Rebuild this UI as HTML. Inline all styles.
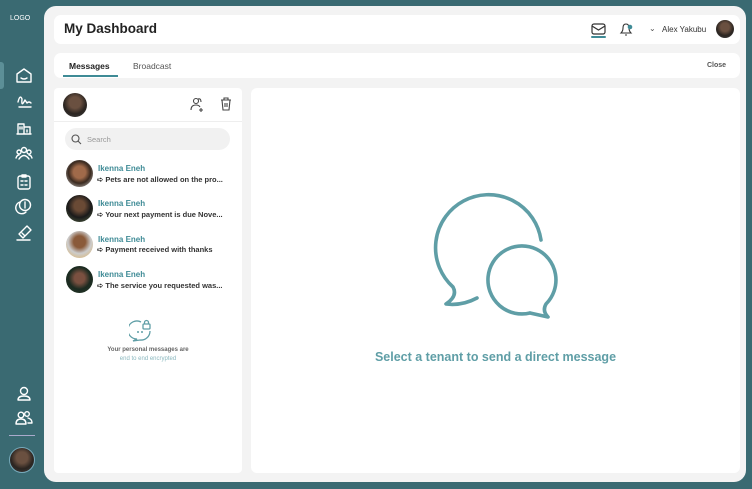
<!DOCTYPE html>
<html><head><meta charset="utf-8"><style>
*{box-sizing:border-box;margin:0;padding:0}
body{width:752px;height:489px;background:#3a6a72;font-family:"Liberation Sans",sans-serif;position:relative;overflow:hidden}
.abs{position:absolute}
.main{left:44px;top:6px;width:702px;height:476px;background:#f3f3f3;border-radius:12px}
.white{background:#fff;border-radius:7px}
.ic{stroke:#fff;fill:none;stroke-width:1.4;stroke-linecap:round;stroke-linejoin:round}
.av{border-radius:50%;background:radial-gradient(circle at 50% 40%,#6a5040 0 30%,#2a2420 60%,#444 100%)}
.name{color:#3f8b96;font-size:8px;font-weight:bold}
.msg{color:#333;font-size:7.5px;font-weight:bold;white-space:nowrap}
</style></head><body>
<div class="abs" style="left:10px;top:15px;color:#fff;font-size:7px">LOGO</div>
<div class="abs" style="left:0;top:62px;width:4px;height:27px;background:#5c8f97;border-radius:0 3px 3px 0"></div>
<svg class="abs" style="left:14px;top:66px" width="20" height="190" viewBox="0 0 20 190">
<g class="ic">
<path d="M10 3 L17 8 V16 H3 V8 Z"/><path d="M7 12 Q10 14 13 12"/>
<path d="M4 36 Q6 28 8 33 Q7 42 11 34 L13 37 Q15 35 17 37 M5 41 H17"/>
<path d="M4 68 V58 H10 V68 M10 61 H16 V68 M3 68 H17 M6 61 V63 M8 61 V63 M13 64 V66"/>
<circle cx="10" cy="84" r="2.5"/><circle cx="5" cy="86" r="2"/><circle cx="15" cy="86" r="2"/><path d="M5 93 Q10 86 15 93 M2 92 Q3 89 5 89 M18 92 Q17 89 15 89"/>
<rect x="4" y="110" width="12" height="13" rx="2"/><path d="M8 109 H12 V111 H8 Z M7 115 H9 M11 115 H13 M7 119 H9 M11 119 H13"/>
<circle cx="11" cy="139" r="5.5"/><path d="M6 136 A6 6 0 1 0 12 146"/><path d="M11 136 V142"/>
<path d="M5 168 L13 160 L17 164 L9 172 Z M3 174 H16 M8 167 L11 170"/>
</g></svg>
<svg class="abs" style="left:14px;top:385px" width="20" height="45" viewBox="0 0 20 45">
<g class="ic"><circle cx="10" cy="6" r="3.5"/><path d="M4 15 Q4 11 10 11 Q16 11 16 15 Z"/>
<circle cx="7" cy="30" r="2.8"/><circle cx="13" cy="29" r="2.3"/><path d="M2 39 Q2 34 7 34 Q12 34 12 39 Z M14 33 Q18 34 18 38 H14"/></g></svg>
<div class="abs" style="left:9px;top:435px;width:26px;height:1px;background:#aac"></div>
<div class="abs av" style="left:9px;top:447px;width:26px;height:26px;border:1.5px solid #7ab"></div>

<div class="abs main"></div>
<div class="abs white" style="left:54px;top:15px;width:686px;height:29px"></div>
<div class="abs" style="left:64px;top:21px;font-size:13.5px;font-weight:bold;color:#222">My Dashboard</div>
<svg class="abs" style="left:589px;top:22px" width="20" height="16"><rect x="3" y="2" width="13" height="10" rx="2" fill="none" stroke="#333" stroke-width="1.2"/><path d="M3 4 L9.5 8 L16 4" fill="none" stroke="#333" stroke-width="1.2"/><rect x="2" y="14" width="15" height="2" rx="1" fill="#3f8b96"/></svg>
<svg class="abs" style="left:618px;top:21px" width="16" height="16"><path d="M3 12 Q5 10 5 7 Q5 3 8 3 Q11 3 11 7 Q11 10 13 12 Z M7 14 H9" fill="none" stroke="#333" stroke-width="1.1"/><circle cx="12" cy="6" r="2.3" fill="#3f8b96"/></svg>
<div class="abs" style="left:649px;top:24px;font-size:8px;color:#555">⌄</div>
<div class="abs" style="left:662px;top:25px;font-size:8px;color:#333">Alex Yakubu</div>
<div class="abs av" style="left:716px;top:20px;width:18px;height:18px"></div>

<div class="abs white" style="left:54px;top:53px;width:686px;height:25px"></div>
<div class="abs" style="left:69px;top:61px;font-size:8.5px;color:#222;font-weight:bold">Messages</div>
<div class="abs" style="left:63px;top:75px;width:55px;height:2px;background:#3f8b96"></div>
<div class="abs" style="left:133px;top:61px;font-size:8.5px;color:#555">Broadcast</div>
<div class="abs" style="left:707px;top:62px;font-size:7px;color:#555;font-weight:bold">Close</div>

<div class="abs" style="left:54px;top:88px;width:188px;height:385px;background:#fff;border-radius:4px"></div>
<div class="abs av" style="left:63px;top:93px;width:24px;height:24px"></div>
<svg class="abs" style="left:189px;top:96px" width="44" height="16"><g fill="none" stroke="#444" stroke-width="1.1"><circle cx="7" cy="5" r="2.5"/><path d="M2 14 Q2 9 7 9 Q10 9 11 11 M12 12 V16 M10 14 H14 M9 3 Q12 2 12 6"/><path d="M32 4 H42 M35 4 V2 H39 V4 M33 4 L34 14 H40 L41 4 M36 7 V11 M38 7 V11"/></g></svg>
<div class="abs" style="left:54px;top:121px;width:188px;height:1px;background:#eee"></div>
<div class="abs" style="left:65px;top:128px;width:165px;height:22px;background:#f1f1f1;border-radius:11px"></div>
<svg class="abs" style="left:71px;top:134px" width="11" height="11"><circle cx="4.5" cy="4.5" r="3.5" fill="none" stroke="#555" stroke-width="1.1"/><path d="M7 7 L10 10" stroke="#555" stroke-width="1.1"/></svg>
<div class="abs" style="left:87px;top:135px;font-size:7.5px;color:#999">Search</div>

<div class="abs av" style="left:66px;top:160px;width:27px;height:27px;background:radial-gradient(circle at 50% 45%,#a06a4a 0 30%,#3a2a20 55%,#ddd 100%)"></div>
<div class="abs name" style="left:98px;top:164px">Ikenna Eneh</div>
<div class="abs msg" style="left:97px;top:175px">➪ Pets are not allowed on the pro...</div>
<div class="abs av" style="left:66px;top:195px;width:27px;height:27px;background:radial-gradient(circle at 50% 40%,#6a4a35 0 25%,#1a1a1a 55%,#5a6a4a 100%)"></div>
<div class="abs name" style="left:98px;top:199px">Ikenna Eneh</div>
<div class="abs msg" style="left:97px;top:210px">➪ Your next payment is due Nove...</div>
<div class="abs av" style="left:66px;top:231px;width:27px;height:27px;background:radial-gradient(circle at 50% 40%,#8a5a3a 0 28%,#ccc 55%,#e0b060 100%)"></div>
<div class="abs name" style="left:98px;top:235px">Ikenna Eneh</div>
<div class="abs msg" style="left:97px;top:245px">➪ Payment received with thanks</div>
<div class="abs av" style="left:66px;top:266px;width:27px;height:27px;background:radial-gradient(circle at 50% 45%,#7a5040 0 25%,#1a2a20 55%,#2a3a2a 100%)"></div>
<div class="abs name" style="left:98px;top:270px">Ikenna Eneh</div>
<div class="abs msg" style="left:97px;top:281px">➪ The service you requested was...</div>

<svg class="abs" style="left:129px;top:319px" width="26" height="24"><g fill="none" stroke="#5f9ea6" stroke-width="1.3"><path d="M12 3 A9 9 0 1 0 8 20 L4 22 L11 21 A9 9 0 0 0 21 12"/><rect x="14" y="5" width="7" height="5" rx="1"/><path d="M15.5 5 V3.5 A2 2 0 0 1 19.5 3.5 V5"/></g><circle cx="9" cy="13" r="1" fill="#5f9ea6"/><circle cx="13" cy="13" r="1" fill="#5f9ea6"/></svg>
<div class="abs" style="left:54px;top:347px;width:188px;text-align:center;font-size:6px;color:#666;font-weight:bold">Your personal messages are</div>
<div class="abs" style="left:54px;top:356px;width:188px;text-align:center;font-size:6px;color:#8bb8bf">end to end encrypted</div>

<div class="abs" style="left:251px;top:88px;width:489px;height:385px;background:#fff;border-radius:6px"></div>
<svg class="abs" style="left:251px;top:88px" width="489" height="385"><g fill="none" stroke="#5f9ea6" stroke-width="3.6" stroke-linecap="round" stroke-linejoin="round" transform="translate(-251,-88)">
<path d="M541 240 A53 53 0 1 0 453 287 Q458 296 446 304 Q462 306 477 298"/>
<path d="M530 313 A34 34 0 1 1 546 304 Q542 311 548 317 L530 313"/>
</g></svg>
<div class="abs" style="left:251px;top:350px;width:489px;text-align:center;font-size:12.5px;font-weight:bold;color:#5f9ea6">Select a tenant to send a direct message</div>
</body></html>
